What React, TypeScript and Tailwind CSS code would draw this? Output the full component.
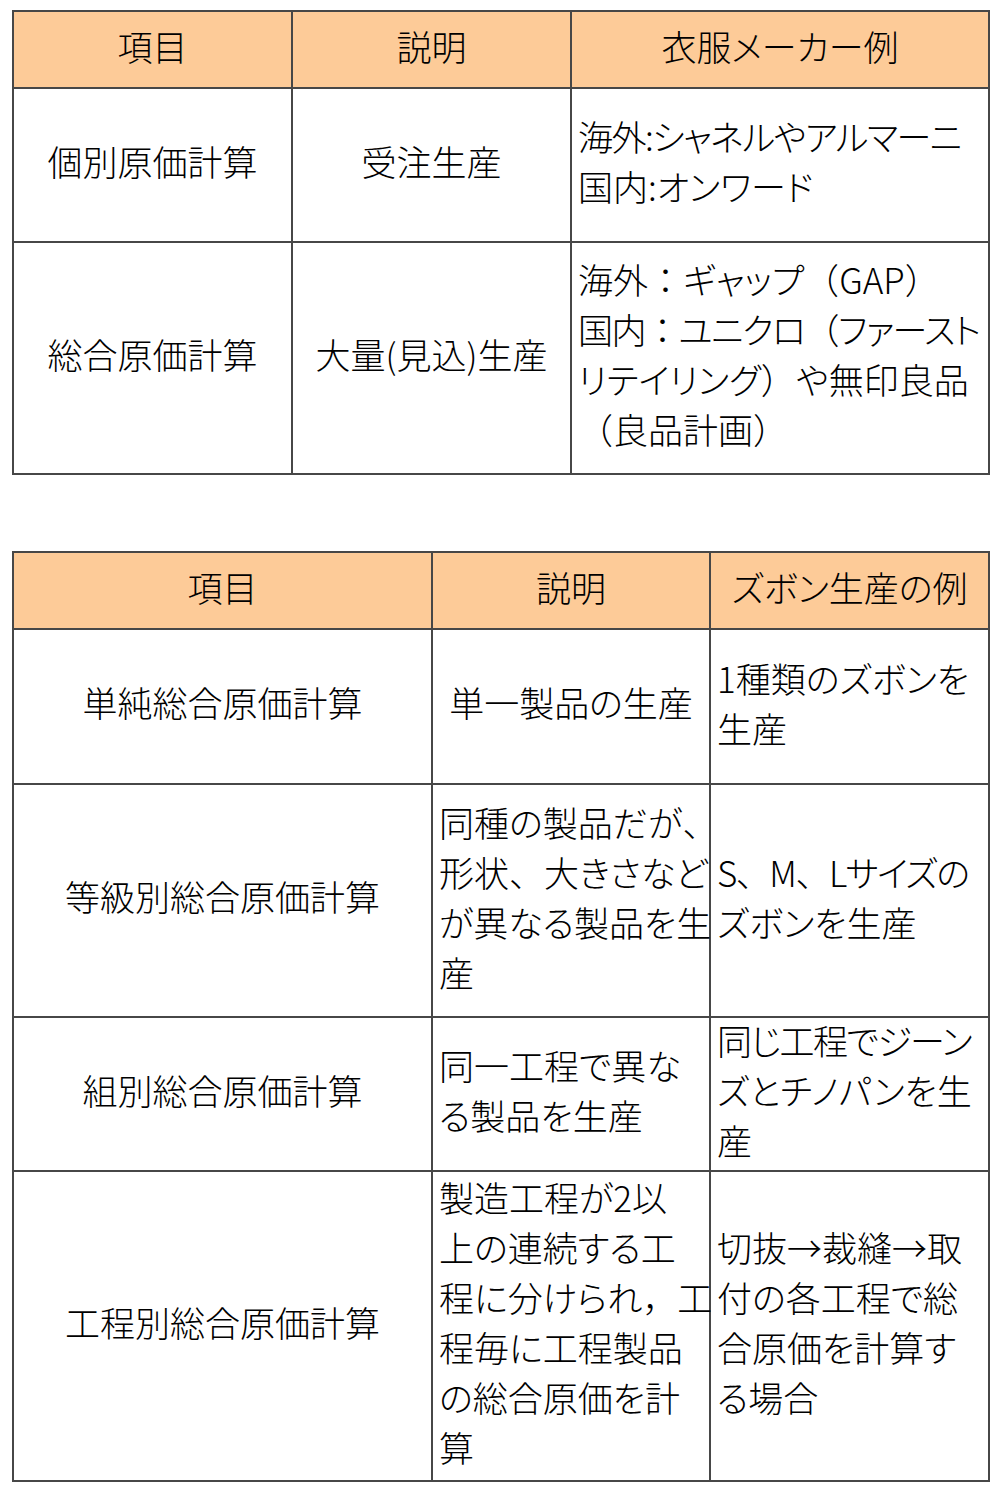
import React from 'react'

type Row = {
  h: string
  cells: { lines: string[]; align: 'center' | 'left' }[]
}

type Table = {
  cols: string[]
  header: string[]
  rows: Row[]
}

const tables: Table[] = [
  {
    cols: ['w-[279px]', 'w-[279px]', 'w-[418px]'],
    header: ['項目', '説明', '衣服メーカー例'],
    rows: [
      {
        h: 'h-[154px]',
        cells: [
          { lines: ['個別原価計算'], align: 'center' },
          { lines: ['受注生産'], align: 'center' },
          { lines: ['海外:シャネルやアルマーニ', '国内:オンワード'], align: 'left' },
        ],
      },
      {
        h: 'h-[232px]',
        cells: [
          { lines: ['総合原価計算'], align: 'center' },
          { lines: ['大量(見込)生産'], align: 'center' },
          {
            lines: ['海外：ギャップ（GAP）', '国内：ユニクロ（ファースト', 'リテイリング）や無印良品', '（良品計画）'],
            align: 'left',
          },
        ],
      },
    ],
  },
  {
    cols: ['w-[419px]', 'w-[278px]', 'w-[279px]'],
    header: ['項目', '説明', 'ズボン生産の例'],
    rows: [
      {
        h: 'h-[155px]',
        cells: [
          { lines: ['単純総合原価計算'], align: 'center' },
          { lines: ['単一製品の生産'], align: 'center' },
          { lines: ['1種類のズボンを', '生産'], align: 'left' },
        ],
      },
      {
        h: 'h-[233px]',
        cells: [
          { lines: ['等級別総合原価計算'], align: 'center' },
          { lines: ['同種の製品だが、', '形状、大きさなど', 'が異なる製品を生', '産'], align: 'left' },
          { lines: ['S、M、Lサイズの', 'ズボンを生産'], align: 'left' },
        ],
      },
      {
        h: 'h-[154px]',
        cells: [
          { lines: ['組別総合原価計算'], align: 'center' },
          { lines: ['同一工程で異な', 'る製品を生産'], align: 'left' },
          { lines: ['同じ工程でジーン', 'ズとチノパンを生', '産'], align: 'left' },
        ],
      },
      {
        h: 'h-[310px]',
        cells: [
          { lines: ['工程別総合原価計算'], align: 'center' },
          {
            lines: ['製造工程が2以', '上の連続する工', '程に分けられ，工', '程毎に工程製品', 'の総合原価を計', '算'],
            align: 'left',
          },
          { lines: ['切抜→裁縫→取', '付の各工程で総', '合原価を計算す', 'る場合'], align: 'left' },
        ],
      },
    ],
  },
]

// lines that run a little wide in this font
const tight = new Set(['国内：ユニクロ（ファースト', '海外:シャネルやアルマーニ', 'S、M、Lサイズの', '同じ工程でジーン'])

// full-width punctuation keeps its full em, kana get proportional widths
function Line({ text }: { text: string }) {
  const parts = text.split(/([（）：，、])/)
  return (
    <div className={tight.has(text) ? 'whitespace-nowrap tracking-[-1.5px]' : 'whitespace-nowrap'}>
      {parts.map((p, i) =>
        /^[（）：，、]$/.test(p) ? (
          <span key={i} className="[font-feature-settings:normal]">
            {p}
          </span>
        ) : (
          <span key={i}>{p}</span>
        ),
      )}
    </div>
  )
}

function DataTable({ t }: { t: Table }) {
  return (
    <table className="table-fixed border-collapse w-[976px]">
      <colgroup>
        {t.cols.map((c, i) => (
          <col key={i} className={c} />
        ))}
      </colgroup>
      <thead>
        <tr className="h-[77px] bg-[#fdcb98]">
          {t.header.map((h, i) => (
            <th key={i} className="border-2 border-[#474747] font-light text-center align-middle p-0">
              <div className="-mt-[8px]">
                <Line text={h} />
              </div>
            </th>
          ))}
        </tr>
      </thead>
      <tbody>
        {t.rows.map((r, ri) => (
          <tr key={ri} className={r.h}>
            {r.cells.map((c, ci) => (
              <td
                key={ci}
                className={
                  c.align === 'center'
                    ? 'border-2 border-[#474747] align-middle text-center p-0'
                    : 'border-2 border-[#474747] align-middle text-left pl-[6px] pr-0 py-0'
                }
              >
                <div className={c.align === 'center' ? '-mt-[9px]' : '-mt-[8px]'}>
                  {c.lines.map((l, li) => (
                    <Line key={li} text={l} />
                  ))}
                </div>
              </td>
            ))}
          </tr>
        ))}
      </tbody>
    </table>
  )
}

export default function App() {
  return (
    <div className="w-[1000px] min-h-[1490px] bg-white pt-[10px] pl-[12px] text-[35px] leading-[50px] font-light text-black [font-family:'Noto_Sans_CJK_JP','Noto_Sans',sans-serif] [font-feature-settings:'palt']">
      <div className="flex flex-col gap-[76px]">
        {tables.map((t, i) => (
          <DataTable key={i} t={t} />
        ))}
      </div>
    </div>
  )
}
